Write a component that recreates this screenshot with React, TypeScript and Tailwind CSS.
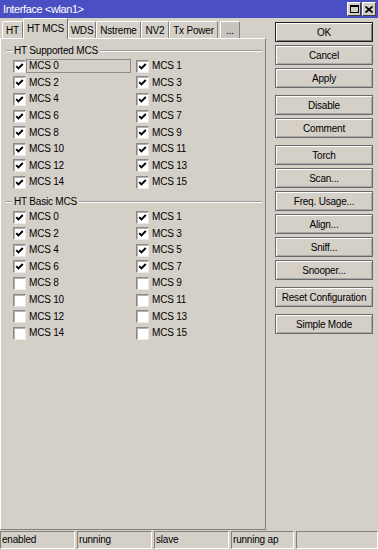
import React from 'react'

const supported = Array.from({ length: 16 }, (_, i) => ({ n: i, on: true }))
const basic = Array.from({ length: 16 }, (_, i) => ({ n: i, on: i < 8 }))

const tabs = [
  { label: 'HT', w: 'w-[21px]' },
  { label: 'HT MCS', w: 'w-[45px]', active: true },
  { label: 'WDS', w: 'w-[28px]' },
  { label: 'Nstreme', w: 'w-[45px]' },
  { label: 'NV2', w: 'w-[28px]' },
  { label: 'Tx Power', w: 'w-[49px]' },
]

const buttonGroups = [
  ['OK', 'Cancel', 'Apply'],
  ['Disable', 'Comment'],
  ['Torch', 'Scan...', 'Freq. Usage...', 'Align...', 'Sniff...', 'Snooper...'],
  ['Reset Configuration'],
  ['Simple Mode'],
]

const status = [
  { text: 'enabled', w: 'w-[75px]' },
  { text: 'running', w: 'w-[75px]' },
  { text: 'slave', w: 'w-[75px]' },
  { text: 'running ap', w: 'w-[63px]' },
  { text: '', w: 'flex-1' },
]

function Check({ on }: { on: boolean }) {
  return (
    <span className="w-[13px] h-[13px] shrink-0 bg-white border border-t-[#8a8a8a] border-l-[#8a8a8a] border-r-[#e8e8e8] border-b-[#e8e8e8] shadow-[inset_1px_1px_0_#b0b0b0] flex items-center justify-center">
      {on && (
        <svg width="9" height="9" viewBox="0 0 9 9">
          <path d="M1.2 4.2 L3.4 6.4 L7.8 2" stroke="#000" strokeWidth="1.9" fill="none" />
        </svg>
      )}
    </span>
  )
}

function Etched({ className }: { className: string }) {
  return <div className={`h-[2px] border-t border-[#9c9c9c] border-b border-b-white ${className}`} />
}

function Group({ title, items, focusFirst }: { title: string; items: { n: number; on: boolean }[]; focusFirst?: boolean }) {
  return (
    <div>
      <div className="flex items-center h-[12px] pl-[5px] pr-[3px]">
        <Etched className="w-[6px]" />
        <span className="px-[2px] leading-[12px]">{title}</span>
        <Etched className="flex-1" />
      </div>
      <div className="grid grid-cols-[123px_1fr] pl-[12px] mt-px">
        {items.map((it) => (
          <div key={it.n} className="flex items-center h-[16.6px]">
            <Check on={it.on} />
            {focusFirst && it.n === 0 ? (
              <span className="w-[105px] h-[14px] border border-[#8c8c8c] pl-[2px] leading-[12px]">MCS {it.n}</span>
            ) : (
              <span className="pl-[3px] leading-[12px]">MCS {it.n}</span>
            )}
          </div>
        ))}
      </div>
    </div>
  )
}

function WinButton({ label }: { label: string }) {
  const isDefault = label === 'OK'
  return (
    <div
      className={`h-[20px] w-[98px] flex items-center justify-center bg-[#d4d0c8] border ${
        isDefault
          ? 'border-[#202020] shadow-[inset_1px_1px_0_#fff,inset_-1px_-1px_0_#808080]'
          : 'border-[#6a6a6a] shadow-[inset_1px_1px_0_#fff,inset_-1px_-1px_0_#a8a8a8]'
      }`}
    >
      {label}
    </div>
  )
}

export default function App() {
  return (
    <div className="w-[378px] h-[550px] bg-[#d4d0c8] flex flex-col overflow-hidden text-[10px] tracking-[-0.2px] text-black font-['Liberation_Sans',Arial,sans-serif]">
      {/* title bar */}
      <div className="h-[18px] bg-[#4a50c4] flex items-center pl-[3px] pr-[2px]">
        <span className="text-white text-[11px] tracking-[-0.4px] flex-1">Interface &lt;wlan1&gt;</span>
        <div className="w-[14px] h-[14px] bg-[#d4d0c8] border border-t-white border-l-white border-r-[#404040] border-b-[#404040] flex items-center justify-center">
          <svg width="9" height="8" viewBox="0 0 9 8">
            <rect x="0.5" y="0.5" width="8" height="7" fill="none" stroke="#000" />
            <rect x="0" y="0" width="9" height="2" fill="#000" />
          </svg>
        </div>
        <div className="w-[14px] h-[14px] ml-px bg-[#d4d0c8] border border-t-white border-l-white border-r-[#404040] border-b-[#404040] flex items-center justify-center">
          <svg width="8" height="7" viewBox="0 0 8 7">
            <path d="M0.5 0.5 L7.5 6.5 M7.5 0.5 L0.5 6.5" stroke="#000" strokeWidth="1.7" />
          </svg>
        </div>
      </div>

      {/* body */}
      <div className="flex flex-1 min-h-0">
        <div className="w-[266px] flex flex-col">
          <div className="h-[20px] flex items-end pl-[2px]">
            {tabs.map((t) =>
              t.active ? (
                <div
                  key={t.label}
                  className={`${t.w} h-[21px] -mb-px relative z-10 bg-[#d4d0c8] border-t border-l border-white border-r border-r-[#707070] rounded-t-[2px] flex items-center justify-center pb-[1px]`}
                >
                  {t.label}
                </div>
              ) : (
                <div
                  key={t.label}
                  className={`${t.w} h-[17px] border-t border-l border-white border-r border-r-[#808080] rounded-t-[2px] flex items-center justify-center`}
                >
                  {t.label}
                </div>
              )
            )}
            <div className="w-[20px] h-[17px] ml-[2px] bg-[#c9c5be] border-t border-l border-white border-r border-r-[#808080] rounded-t-[2px] flex items-center justify-center">
              ...
            </div>
          </div>
          <div className="flex-1 border-t border-l border-white border-r border-b border-r-[#808080] border-b-[#808080] pt-[6px]">
            <Group title="HT Supported MCS" items={supported} focusFirst />
            <div className="mt-[5px]">
              <Group title="HT Basic MCS" items={basic} />
            </div>
          </div>
        </div>

        <div className="flex flex-col pl-[9px] pt-[4px]">
          {buttonGroups.map((g, gi) => (
            <div key={gi} className={`flex flex-col gap-[3px] ${gi > 0 ? 'mt-[7px]' : ''}`}>
              {g.map((b) => (
                <WinButton key={b} label={b} />
              ))}
            </div>
          ))}
        </div>
      </div>

      {/* status bar */}
      <div className="h-[20px] pt-px flex gap-[2px]">
        {status.map((s, i) => (
          <div
            key={i}
            className={`${s.w} h-[18px] border border-t-[#808080] border-l-[#808080] border-r-white border-b-white pl-px leading-[16px]`}
          >
            {s.text}
          </div>
        ))}
      </div>
    </div>
  )
}
